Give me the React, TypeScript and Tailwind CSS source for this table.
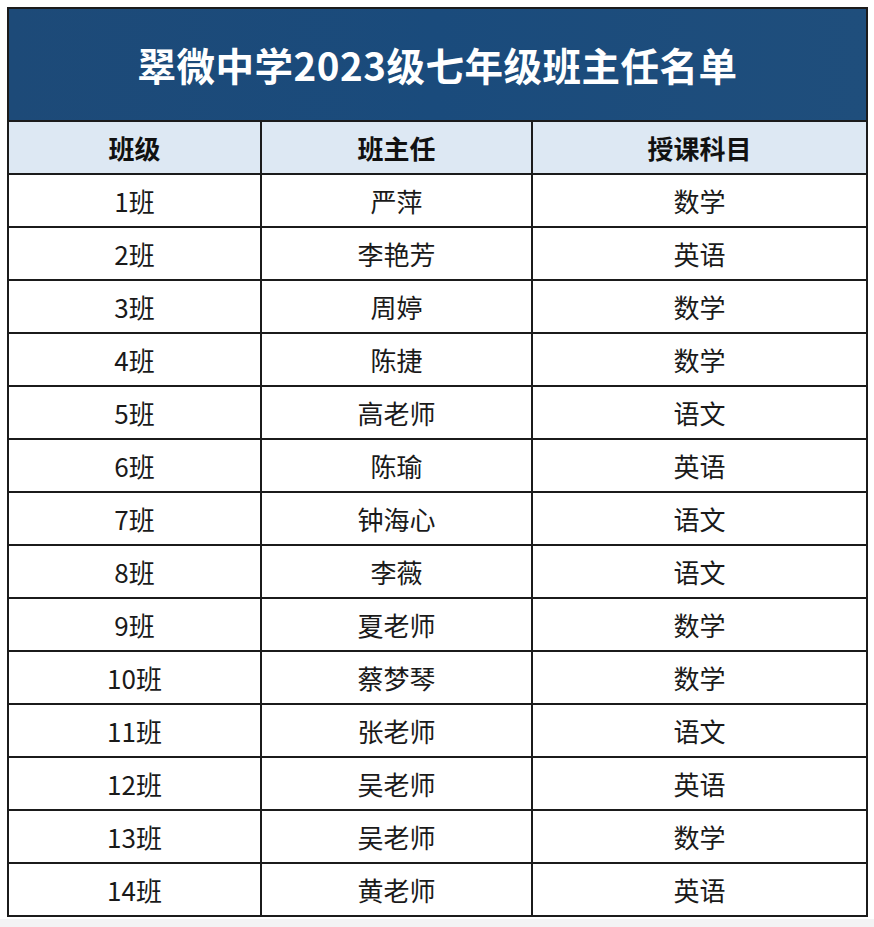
import React from "react";

const rows = [
  { cls: "1班", teacher: "严萍", subject: "数学" },
  { cls: "2班", teacher: "李艳芳", subject: "英语" },
  { cls: "3班", teacher: "周婷", subject: "数学" },
  { cls: "4班", teacher: "陈捷", subject: "数学" },
  { cls: "5班", teacher: "高老师", subject: "语文" },
  { cls: "6班", teacher: "陈瑜", subject: "英语" },
  { cls: "7班", teacher: "钟海心", subject: "语文" },
  { cls: "8班", teacher: "李薇", subject: "语文" },
  { cls: "9班", teacher: "夏老师", subject: "数学" },
  { cls: "10班", teacher: "蔡梦琴", subject: "数学" },
  { cls: "11班", teacher: "张老师", subject: "语文" },
  { cls: "12班", teacher: "吴老师", subject: "英语" },
  { cls: "13班", teacher: "吴老师", subject: "数学" },
  { cls: "14班", teacher: "黄老师", subject: "英语" },
];

const font = "font-['Noto_Sans_CJK_SC','Noto_Sans',sans-serif]";

export default function App() {
  return (
    <div className={`w-[874px] h-[927px] bg-white flex flex-col ${font}`}>
      <div className="pt-[7px] pl-[7px] pr-[6px] bg-white">
        <div className="border-2 border-[#1b1b1b]">
          <div className="h-[111px] bg-gradient-to-r from-[#1d4a78] via-[#1a4b7c] to-[#1f4e7c] flex items-center justify-center">
            <h1 className="text-white text-[38.5px] font-bold tracking-[0.5px]">
              翠微中学2023级七年级班主任名单
            </h1>
          </div>
          <div className="grid grid-cols-[253px_271px_1fr] bg-[#dde8f3] border-t-2 border-[#1b1b1b] h-[53px]">
            {["班级", "班主任", "授课科目"].map((h, i) => (
              <div
                key={h}
                className={`flex items-center justify-center text-[26px] font-bold text-[#111] ${i < 2 ? "border-r-2 border-[#1b1b1b]" : ""}`}
              >
                {h}
              </div>
            ))}
          </div>
          {rows.map((r) => (
            <div
              key={r.cls}
              className="grid grid-cols-[253px_271px_1fr] h-[53px] border-t-2 border-[#1b1b1b] text-[26px] text-[#1a1a1a]"
            >
              <div className="flex items-center justify-center border-r-2 border-[#1b1b1b]">{r.cls}</div>
              <div className="flex items-center justify-center border-r-2 border-[#1b1b1b]">{r.teacher}</div>
              <div className="flex items-center justify-center">{r.subject}</div>
            </div>
          ))}
        </div>
      </div>
      <div className="flex-1 mt-[2px] bg-[#f3f3f4]" />
    </div>
  );
}
